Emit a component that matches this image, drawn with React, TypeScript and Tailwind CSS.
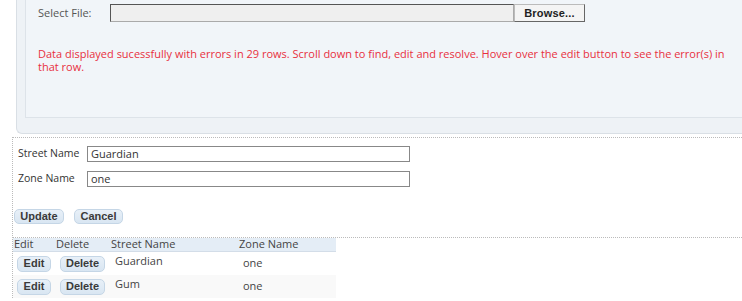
export default function App() {
  const rows = [
    { street: "Guardian", zone: "one" },
    { street: "Gum", zone: "one" },
  ];
  const ui = "font-['Open_Sans',sans-serif]";
  const btn =
    "font-['Liberation_Sans',sans-serif] font-bold text-[11px] text-[#3a3a3a] bg-gradient-to-b from-[#e8f0f8] to-[#d9e6f2] border border-[#c5d6e6] rounded-[5px] leading-none";

  return (
    <div className={`w-[742px] h-[301px] overflow-hidden bg-white ${ui}`}>
      {/* upload panel */}
      <div className="pl-[16px]">
        <div className="h-[134px] bg-[#eef2f6] border-l border-b border-[#d9dfe5] rounded-bl-[6px] pl-[8px]">
          <div className="h-[118px] bg-[#f1f5f9] border-l border-b border-[#dde3e9] pl-[12px] pt-[4px]">
            <div className="flex items-center h-[18px]">
              <span className="w-[72px] text-[11px] text-[#555]">Select File:</span>
              <div className="flex h-[18px]">
                <div className="w-[404px] h-[18px] bg-[#efefef] border border-[#aaa] border-t-[#555] border-l-[#555]" />
                <button className="w-[71px] h-[18px] bg-[#f4f4f4] border border-[#bbb] border-r-[#666] border-b-[#666] font-['Liberation_Sans',sans-serif] font-bold text-[11px] text-[#222] tracking-[0.2px] leading-none">
                  Browse...
                </button>
              </div>
            </div>
            <p className="mt-[25px] w-[700px] text-[11px] leading-[13px] text-[#e8303e]">
              Data displayed sucessfully with errors in 29 rows. Scroll down to find, edit and resolve. Hover over the edit button to see the error(s) in that row.
            </p>
          </div>
        </div>
      </div>

      {/* edit form + grid */}
      <div className="ml-[12px] mt-[3px] border-t border-l border-dotted border-[#bbb]">
        <div className="pl-[5px] pt-[8px] flex flex-col gap-[9px]">
          <div className="flex items-center">
            <span className="w-[69px] text-[10.5px] text-[#333]">Street Name</span>
            <input
              readOnly
              value="Guardian"
              className="w-[323px] h-[16px] border border-[#888] px-[3px] text-[11px] text-[#333] outline-none"
            />
          </div>
          <div className="flex items-center">
            <span className="w-[69px] text-[10.5px] text-[#333]">Zone Name</span>
            <input
              readOnly
              value="one"
              className="w-[323px] h-[16px] border border-[#888] px-[3px] text-[11px] text-[#333] outline-none"
            />
          </div>
        </div>
        <div className="flex gap-[10px] pl-px mt-[22px]">
          <button className={`${btn} w-[50px] h-[15px]`}>Update</button>
          <button className={`${btn} w-[49px] h-[15px]`}>Cancel</button>
        </div>

        <div className="mt-[13px] border-t border-dotted border-[#bbb]">
          <div className="w-[323px] text-[11px] text-[#444]">
            <div className="flex h-[14px] items-center bg-[#e4edf6] border-b border-[#d3dde8]">
              <span className="w-[43px] pl-px">Edit</span>
              <span className="w-[55px]">Delete</span>
              <span className="w-[128px]">Street Name</span>
              <span>Zone Name</span>
            </div>
            {rows.map((r, i) => (
              <div
                key={r.street}
                className={`flex items-center h-[23px] ${i % 2 ? "bg-[#f9f9f9]" : "bg-white"}`}
              >
                <div className="w-[47px] pl-[4px]">
                  <button className={`${btn} w-[34px] h-[16px]`}>Edit</button>
                </div>
                <div className="w-[55px]">
                  <button className={`${btn} w-[45px] h-[16px]`}>Delete</button>
                </div>
                <span className="w-[128px] text-[#444] -mt-[4px]">{r.street}</span>
                <span className="text-[#444]">{r.zone}</span>
              </div>
            ))}
          </div>
        </div>
      </div>
    </div>
  );
}
